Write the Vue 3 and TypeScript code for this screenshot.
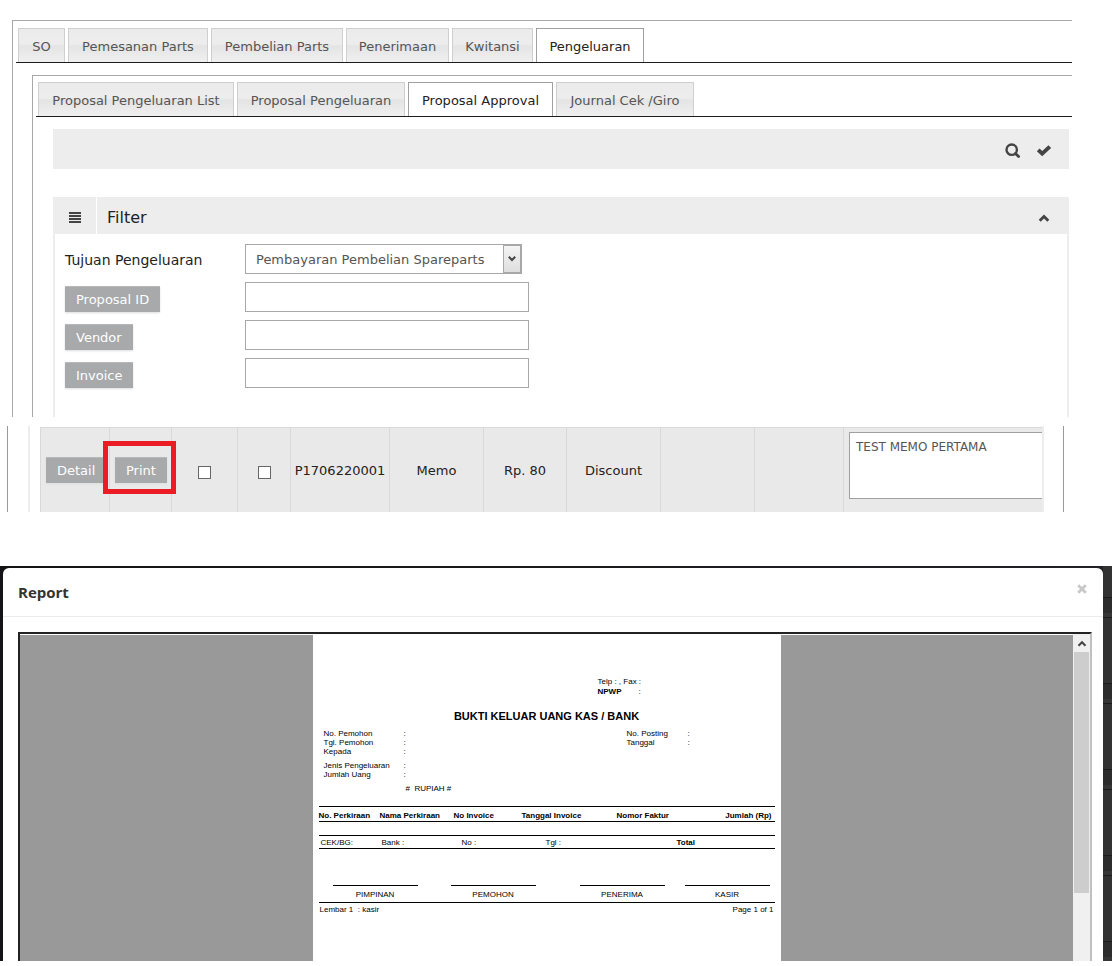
<script setup lang="ts">
import { ref } from 'vue'

interface Tab {
  label: string
  width: number
}

const mainTabs: Tab[] = [
  { label: 'SO', width: 47 },
  { label: 'Pemesanan Parts', width: 140 },
  { label: 'Pembelian Parts', width: 132 },
  { label: 'Penerimaan', width: 103 },
  { label: 'Kwitansi', width: 81 },
  { label: 'Pengeluaran', width: 108 },
]
const subTabs: Tab[] = [
  { label: 'Proposal Pengeluaran List', width: 196 },
  { label: 'Proposal Pengeluaran', width: 168 },
  { label: 'Proposal Approval', width: 145 },
  { label: 'Journal Cek /Giro', width: 138 },
]
const activeMain = ref('Pengeluaran')
const activeSub = ref('Proposal Approval')

const purpose = ref('Pembayaran Pembelian Spareparts')
const filters = ref([
  { id: 'proposal', label: 'Proposal ID', value: '' },
  { id: 'vendor', label: 'Vendor', value: '' },
  { id: 'invoice', label: 'Invoice', value: '' },
])
const memo = ref('TEST MEMO PERTAMA')

const requestInfo = ['No. Pemohon', 'Tgl. Pemohon', 'Kepada']
const expenseInfo = ['Jenis Pengeluaran', 'Jumlah Uang']
const postingInfo = ['No. Posting', 'Tanggal']
const signers = ['PIMPINAN', 'PEMOHON', 'PENERIMA', 'KASIR']
</script>

<template>
  <div class="screen">
    <section class="workspace">
      <nav class="tabs" aria-label="Modul">
        <button
          v-for="tab in mainTabs"
          :key="tab.label"
          type="button"
          class="tab"
          :class="{ active: tab.label === activeMain }"
          :style="{ width: tab.width + 'px' }"
          @click="activeMain = tab.label"
        >{{ tab.label }}</button>
      </nav>

      <div class="subspace">
        <nav class="tabs" aria-label="Proposal">
          <button
            v-for="tab in subTabs"
            :key="tab.label"
            type="button"
            class="tab"
            :class="{ active: tab.label === activeSub }"
            :style="{ width: tab.width + 'px' }"
            @click="activeSub = tab.label"
          >{{ tab.label }}</button>
        </nav>

        <div class="toolbar">
          <button type="button" class="icon-btn" aria-label="Cari">
            <svg width="16" height="16" viewBox="0 0 16 16">
              <circle cx="6.7" cy="6.7" r="5.2" fill="none" stroke="#444" stroke-width="2.4" />
              <path d="M10.4 10.4 L13.6 13.6" stroke="#444" stroke-width="2.8" stroke-linecap="round" />
            </svg>
          </button>
          <button type="button" class="icon-btn" aria-label="Setujui">
            <svg width="16" height="16" viewBox="0 0 16 16">
              <path d="M2.2 6.8 L6.2 10.6 L13.8 3.6" fill="none" stroke="#444" stroke-width="3.9" />
            </svg>
          </button>
        </div>

        <section class="panel">
          <header class="panel-head">
            <span class="panel-icon">
              <svg width="12" height="12" viewBox="0 0 12 12" fill="#444">
                <rect y="0" width="12" height="2" />
                <rect y="3" width="12" height="2" />
                <rect y="6" width="12" height="2" />
                <rect y="9" width="12" height="2" />
              </svg>
            </span>
            <h2>Filter</h2>
            <button type="button" class="icon-btn" aria-label="Tutup filter">
              <svg width="12" height="12" viewBox="0 0 12 12">
                <path d="M1.7 8.8 L6 4.5 L10.3 8.8" fill="none" stroke="#444" stroke-width="2.8" />
              </svg>
            </button>
          </header>
          <div class="panel-body">
            <div class="field">
              <label for="purpose">Tujuan Pengeluaran</label>
              <span class="select-box">
                <select id="purpose" v-model="purpose">
                  <option>Pembayaran Pembelian Spareparts</option>
                </select>
                <span class="select-arrow">
                  <svg width="8" height="6" viewBox="0 0 8 6">
                    <path d="M0.8 0.8 L4 4 L7.2 0.8" fill="none" stroke="#444" stroke-width="2" />
                  </svg>
                </span>
              </span>
            </div>
            <div v-for="f in filters" :key="f.id" class="field">
              <span class="field-action">
                <button :id="f.id + '-btn'" type="button" class="btn">{{ f.label }}</button>
              </span>
              <input v-model="f.value" type="text" :aria-labelledby="f.id + '-btn'" />
            </div>
          </div>
        </section>
      </div>
    </section>

    <section class="result">
      <div class="result-inner">
        <table class="grid">
          <colgroup>
            <col class="c1" /><col class="c2" /><col class="c3" /><col class="c4" /><col class="c5" />
            <col class="c6" /><col class="c7" /><col class="c8" /><col class="c9" /><col class="c10" /><col />
          </colgroup>
          <tbody>
            <tr>
              <td class="left"><button type="button" class="btn">Detail</button></td>
              <td class="left marked"><button type="button" class="btn">Print</button></td>
              <td><input type="checkbox" aria-label="Setuju" /></td>
              <td><input type="checkbox" aria-label="Tolak" /></td>
              <td>P1706220001</td>
              <td>Memo</td>
              <td>Rp. 80</td>
              <td>Discount</td>
              <td></td>
              <td></td>
              <td class="memo"><textarea v-model="memo" aria-label="Memo"></textarea></td>
            </tr>
          </tbody>
        </table>
      </div>
    </section>

    <section class="backdrop">
      <div class="modal" role="dialog" aria-labelledby="report-title">
        <header class="modal-head">
          <h3 id="report-title">Report</h3>
          <button type="button" class="close" aria-label="Tutup">
            <svg width="10" height="10" viewBox="0 0 10 10">
              <path d="M1.2 1.2 L8.8 8.8 M8.8 1.2 L1.2 8.8" stroke="#c8c8c8" stroke-width="2.8" />
            </svg>
          </button>
        </header>
        <div class="viewer">
          <div class="canvas">
            <article class="paper">
              <div class="contact">
                <p>Telp : , Fax :</p>
                <p class="npwp"><b>NPWP</b><span>:</span></p>
              </div>
              <h4>BUKTI KELUAR UANG KAS / BANK</h4>
              <div class="meta">
                <div>
                  <p v-for="m in requestInfo" :key="m"><span>{{ m }}</span><span>:</span></p>
                  <p v-for="(m, i) in expenseInfo" :key="m" :class="{ spaced: i === 0 }">
                    <span>{{ m }}</span><span>:</span>
                  </p>
                </div>
                <div class="posting">
                  <p v-for="m in postingInfo" :key="m"><span>{{ m }}</span><span>:</span></p>
                </div>
              </div>
              <p class="words"># &nbsp;RUPIAH #</p>
              <table class="lines">
                <thead>
                  <tr>
                    <th class="l1">No. Perkiraan</th>
                    <th class="l2">Nama Perkiraan</th>
                    <th class="l3">No Invoice</th>
                    <th class="l4">Tanggal Invoice</th>
                    <th class="l5">Nomor Faktur</th>
                    <th class="amount">Jumlah (Rp)</th>
                  </tr>
                </thead>
              </table>
              <div class="totals">
                <span>CEK/BG:</span><span>Bank :</span><span>No :</span><span>Tgl :</span><b>Total</b>
              </div>
              <div class="signs">
                <span v-for="s in signers" :key="s">{{ s }}</span>
              </div>
              <footer><span>Lembar 1 &nbsp;: kasir</span><span>Page 1 of 1</span></footer>
            </article>
          </div>
          <div class="scrollbar">
            <svg width="16" height="17" viewBox="0 0 16 17">
              <path d="M4.5 10.8 L8 7.2 L11.5 10.8" fill="none" stroke="#444" stroke-width="2" />
            </svg>
            <div class="thumb"></div>
          </div>
        </div>
      </div>
    </section>
  </div>
</template>

<style>
body {
  margin: 0;
  background: #fff;
}
</style>

<style scoped>
* {
  box-sizing: border-box;
}
.screen {
  padding: 20px 0 5px;
  font-family: 'DejaVu Sans', Verdana, sans-serif;
  font-size: 13px;
  color: #222;
}
h2,
h3,
h4,
p {
  margin: 0;
}
button {
  font: inherit;
  cursor: pointer;
}
.workspace {
  margin: 0 40px 0 12px;
  padding: 7px 0 0 3px;
  border: solid #a8a8a8;
  border-width: 1px 0 0 1px;
}
.tabs {
  display: flex;
  gap: 3px;
  padding-left: 2px;
  border-bottom: 1px solid #1c1c1c;
}
.tab {
  height: 34px;
  padding: 2px 0 0;
  border: 1px solid #cfcfcf;
  border-bottom: 0;
  background: linear-gradient(#ebebeb 0%, #ededed 45%, #e4e4e4 52%, #f0f0f0 100%);
  color: #555;
  white-space: nowrap;
}
.tab.active {
  border-color: #a0a0a0;
  background: #fff;
  color: #222;
}
.subspace {
  margin: 12px 0 0 16px;
  padding: 6px 0 0 3px;
  border: solid #a8a8a8;
  border-width: 1px 0 0 1px;
}
.toolbar {
  display: flex;
  justify-content: flex-end;
  align-items: center;
  gap: 15px;
  height: 40px;
  margin: 12px 3px 28px 17px;
  padding: 3px 17px 0 0;
  background: #ededed;
}
.icon-btn {
  display: flex;
  padding: 0;
  border: 0;
  background: none;
}
.panel {
  margin: 0 3px 0 17px;
}
.panel-head {
  display: flex;
  align-items: center;
  height: 37px;
  padding-right: 19px;
  background: #ededed;
}
.panel-icon {
  display: flex;
  align-items: center;
  justify-content: center;
  align-self: stretch;
  width: 44px;
  padding-top: 4px;
  border-right: 1px solid #fff;
}
.panel-head h2 {
  flex: 1;
  padding: 3px 0 0 10px;
  font-size: 16px;
  font-weight: 400;
}
.panel-head .icon-btn {
  padding-top: 4px;
}
.panel-body {
  display: grid;
  gap: 8px;
  padding: 10px 10px 30px;
  border: solid #ededed;
  border-width: 0 2px;
}
.field {
  display: grid;
  grid-template-columns: 180px 1fr;
  align-items: center;
  height: 30px;
}
.field:first-child {
  margin-bottom: -1px;
}
.field label {
  padding-top: 2px;
  font-size: 14px;
}
.field-action {
  display: flex;
  align-self: start;
  padding-top: 5px;
}
.field input {
  width: 284px;
  height: 30px;
  border: 1px solid #a8a8a8;
  background: #fff;
}
.select-box {
  display: flex;
  width: 277px;
  height: 30px;
  border: 1px solid #a8a8a8;
}
.select-box select {
  flex: 1;
  min-width: 0;
  padding: 0 0 0 10px;
  border: 0;
  background: #fff;
  color: #555;
  font: inherit;
  appearance: none;
}
.select-arrow {
  display: flex;
  align-items: center;
  justify-content: center;
  width: 18px;
  border: 1px solid #a8a8a8;
  background: linear-gradient(#f4f4f4, #dedede);
}
.btn {
  height: 26px;
  padding: 0 11px;
  border: 0;
  border-top: 1px solid #b8b8b8;
  background: #a7a9ab;
  color: #fff;
  box-shadow: 0 1px 2px #ddd;
}
.result {
  margin: 9px 48px 0 7px;
  border: solid #999;
  border-width: 0 1px;
}
.result-inner {
  margin: 0 19px 0 20px;
  padding-left: 10px;
  border: solid #ededed;
  border-width: 0 2px;
}
.grid {
  width: 100%;
  table-layout: fixed;
  border-collapse: separate;
  border-spacing: 0;
  border-top: 1px solid #fff;
  background: #e9e9e9;
}
.c1 { width: 69px; }
.c2 { width: 62px; }
.c3 { width: 66px; }
.c4 { width: 53px; }
.c5 { width: 99px; }
.c6 { width: 94px; }
.c7 { width: 83px; }
.c8 { width: 94px; }
.c9 { width: 94px; }
.c10 { width: 89px; }
.grid td {
  height: 85px;
  padding: 0;
  border: solid #d9d9d9;
  border-width: 1px 0 0 1px;
  text-align: center;
  white-space: nowrap;
}
.grid td.left {
  padding-left: 5px;
  text-align: left;
}
.grid input {
  width: 13px;
  height: 13px;
  margin: 7px 0 0;
  border: 1px solid #666;
  background: #fff;
  appearance: none;
}
.marked {
  position: relative;
}
.marked::after {
  content: '';
  box-sizing: border-box;
  position: absolute;
  top: 13px;
  left: -7px;
  width: 73px;
  height: 53px;
  border: 5px solid #ec1c24;
  pointer-events: none;
}
.grid td.memo {
  padding: 4px 0 0 5px;
  vertical-align: top;
}
.memo textarea {
  display: block;
  width: 100%;
  height: 67px;
  padding: 7px 6px;
  border: 1px solid #a0a0a0;
  border-right: 0;
  background: #fff;
  color: #555;
  font: 12px 'DejaVu Sans', Verdana, sans-serif;
  resize: none;
}
.backdrop {
  margin-top: 54px;
  padding: 2px 9px 0 3px;
  background:
    repeating-linear-gradient(
      #323232 0 31px,
      #1c1c1c 31px 32px,
      #2c2c2c 32px 47px,
      #363636 47px 51px,
      #1c1c1c 51px 52px,
      #323232 52px 86px
    ) right / 9px 100% no-repeat,
    linear-gradient(90deg, #141416, #222226);
}
.modal {
  padding: 0 11px 0 15px;
  border-radius: 6px 6px 0 0;
  background: #fff;
}
.modal-head {
  display: flex;
  justify-content: space-between;
  height: 49px;
  margin: 0 -11px 15px -15px;
  padding: 0 16px 0 15px;
  border-bottom: 1px solid #ececec;
}
.modal-head h3 {
  font: 700 15px/49px 'Open Sans', sans-serif;
  color: #333;
}
.close {
  display: flex;
  align-items: center;
  height: 42px;
  padding: 0;
  border: 0;
  background: none;
}
.viewer {
  display: flex;
  border: solid #222;
  border-width: 2px 2px 0;
  border-right-color: #c0c0c0;
}
.canvas {
  flex: 1;
  margin-top: 1px;
  background: #999;
}
.paper {
  width: 468px;
  min-height: 326px;
  margin: 0 auto;
  padding: 42px 6px 0;
  background: #fff;
  color: #000;
  font: 8px/9px 'Liberation Sans', Arial, sans-serif;
}
.contact {
  padding-left: 279px;
  line-height: 10px;
}
.npwp {
  display: grid;
  grid-template-columns: 41px auto;
}
.paper h4 {
  margin: 13px 0 7px;
  font-size: 11px;
  line-height: 12px;
  text-align: center;
}
.meta {
  display: flex;
  padding-left: 5px;
}
.meta > div {
  width: 303px;
}
.meta p {
  display: grid;
  grid-template-columns: 80px auto;
}
.meta .posting p {
  grid-template-columns: 61px auto;
}
.meta > .posting {
  width: auto;
}
.meta p.spaced {
  margin-top: 5px;
}
.words {
  margin: 5px 0 13px;
  padding-left: 87px;
}
.lines {
  width: 100%;
  height: 16px;
  table-layout: fixed;
  border: solid #000;
  border-width: 1px 0;
  border-collapse: separate;
  border-spacing: 0;
}
.lines th {
  padding: 2px 0 0;
  text-align: left;
  white-space: nowrap;
}
.lines .l1 { width: 61px; }
.lines .l2 { width: 74px; }
.lines .l3 { width: 68px; }
.lines .l4 { width: 95px; }
.lines .l5 { width: 90px; }
.lines th.amount {
  padding-right: 3px;
  text-align: right;
}
.totals {
  display: grid;
  grid-template-columns: 61px 80px 84px 131px auto;
  align-items: center;
  height: 14px;
  margin-top: 13px;
  padding-left: 2px;
  border: solid #000;
  border-width: 1px 0;
}
.signs {
  display: grid;
  grid-template-columns: 118px 129px 105px 85px;
  padding: 36px 5px 3px 14px;
  text-align: center;
}
.signs span {
  width: 85px;
  padding-top: 4px;
  border-top: 1px solid #000;
}
footer {
  display: flex;
  justify-content: space-between;
  padding: 2px 1px 0;
  border-top: 1px solid #000;
}
.scrollbar {
  width: 17px;
  padding-left: 1px;
  background: #f0f0f0;
}
.scrollbar svg {
  display: block;
  margin-top: 1px;
}
.thumb {
  width: 15px;
  height: 241px;
  background: #cdcdcd;
}
</style>
